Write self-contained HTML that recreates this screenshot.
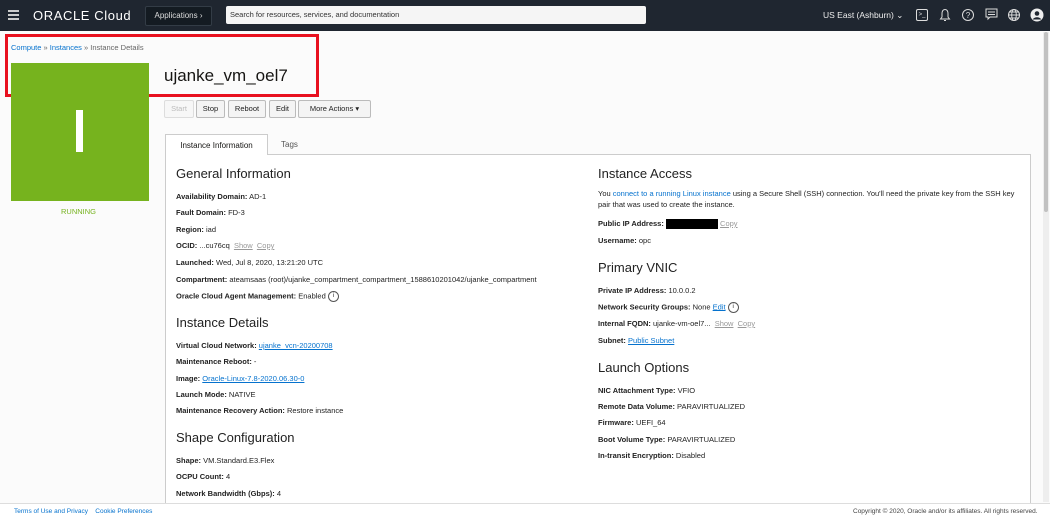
<!DOCTYPE html><html><head><style>
body{margin:0;width:1050px;height:520px;overflow:hidden;background:#fbfbfb;font-family:"Liberation Sans",sans-serif;color:#161513;position:relative}
.nav{position:absolute;left:0;top:0;width:1050px;height:31px;background:#1f2630}
.a{position:absolute;white-space:nowrap}
.row{position:absolute;font-size:7.5px;color:#222}
.row b{font-weight:bold}
h3{position:absolute;margin:0;font-weight:normal;font-size:13px;color:#222;white-space:nowrap}
.btn{position:absolute;top:100px;height:16px;border:1px solid #bbb;background:#f4f4f4;border-radius:2px;font-size:7.5px;line-height:16px;text-align:center;color:#222}
.lk{color:#0572ce}
.gray{color:#999}
.ul{text-decoration:underline;color:#0572ce}
</style></head><body>
<div class="nav">
<div class="a" style="left:8px;top:10px;width:11px;height:1.5px;background:#ccc;box-shadow:0 4px 0 #ccc,0 8px 0 #ccc"></div>
<div class="a" style="left:33px;top:8px;color:#fff;font-size:13px;letter-spacing:0.6px">ORACLE <span>Cloud</span></div>
<div class="a" style="left:145px;top:6px;width:65px;height:18px;background:#141b22;border:1px solid #333c46;border-radius:2px;color:#ddd;font-size:8px;line-height:18px;text-align:center">Applications ›</div>
<div class="a" style="left:226px;top:6px;height:18px;background:#f5f5f5;border-radius:2px;color:#333;font-size:7.5px;line-height:18px;padding-left:4px;box-sizing:border-box;width:420px">Search for resources, services, and documentation</div>
<div class="a" style="left:823px;top:10px;color:#eee;font-size:8.5px">US East (Ashburn) ⌄</div>
<div class="a" style="left:916px;top:9px;width:12px;height:12px;border:1px solid #ddd;border-radius:2px;box-sizing:border-box;color:#ddd;font-size:6px;line-height:10px;text-align:center">&gt;_</div>
<svg class="a" style="left:939px;top:8px" width="12" height="14" viewBox="0 0 12 14"><path d="M6 1.5 C3.5 1.5 3 4 3 6 L3 9 L1.5 11 L10.5 11 L9 9 L9 6 C9 4 8.5 1.5 6 1.5 Z M5 12.5 L7 12.5" fill="none" stroke="#ddd" stroke-width="1"/></svg>
<div class="a" style="left:962px;top:9px;width:12px;height:12px;border:1px solid #ddd;border-radius:50%;box-sizing:border-box;color:#ddd;font-size:8px;line-height:11px;text-align:center">?</div>
<svg class="a" style="left:985px;top:8px" width="13" height="13" viewBox="0 0 13 13"><path d="M1 1 H12 V9 H5 L3 11 V9 H1 Z M3 4 H10 M3 6.5 H10" fill="none" stroke="#ddd" stroke-width="1"/></svg>
<svg class="a" style="left:1007px;top:8px" width="14" height="14" viewBox="0 0 14 14"><g fill="none" stroke="#ddd" stroke-width="1"><circle cx="7" cy="7" r="5.5"/><ellipse cx="7" cy="7" rx="2.3" ry="5.5"/><path d="M1.5 7 H12.5 M2.5 4 H11.5 M2.5 10 H11.5"/></g></svg>
<svg class="a" style="left:1030px;top:8px" width="14" height="14" viewBox="0 0 14 14"><circle cx="7" cy="7" r="6.5" fill="#eee"/><circle cx="7" cy="5.5" r="2.3" fill="#1f2630"/><path d="M2.8 11.5 C4 8.5 10 8.5 11.2 11.5" fill="#1f2630"/></svg>
</div>
<div class="a" style="left:1043px;top:32px;width:6px;height:470px;background:#eee"></div>
<div class="a" style="left:1044px;top:32px;width:4px;height:180px;background:#c1c1c1;border-radius:2px"></div>
<div class="a" style="left:5px;top:34px;width:308px;height:57px;border:3px solid #e8101f"></div>
<div class="a" style="left:11px;top:43px;font-size:7.5px;color:#666"><span class="lk">Compute</span> » <span class="lk">Instances</span> » Instance Details</div>
<div class="a" style="left:11px;top:63px;width:138px;height:138px;background:#76b31e"></div>
<div class="a" style="left:76px;top:110px;width:7px;height:42px;background:#fff"></div>
<div class="a" style="left:61px;top:207px;font-size:7.5px;color:#76b31e">RUNNING</div>
<div class="a" style="left:164px;top:66px;font-size:17px">ujanke_vm_oel7</div>
<div class="btn" style="left:164px;width:28px;color:#bbb;background:#f7f7f7;border-color:#ddd">Start</div>
<div class="btn" style="left:196px;width:27px">Stop</div>
<div class="btn" style="left:228px;width:36px">Reboot</div>
<div class="btn" style="left:269px;width:25px">Edit</div>
<div class="btn" style="left:298px;width:71px">More Actions ▾</div>
<div class="a" style="left:165px;top:134px;width:103px;height:21px;border:1px solid #ccc;border-bottom:none;background:#fff;font-size:8px;line-height:21px;text-align:center;box-sizing:border-box;z-index:2">Instance Information</div>
<div class="a" style="left:281px;top:140px;font-size:8px;color:#555">Tags</div>
<div class="a" style="left:165px;top:154px;width:866px;height:360px;border:1px solid #ccc;background:#fff;box-sizing:border-box"></div>
<h3 style="left:176px;top:166px">General Information</h3>
<div class="row" style="left:176px;top:192px"><b>Availability Domain:</b> AD-1</div>
<div class="row" style="left:176px;top:208px"><b>Fault Domain:</b> FD-3</div>
<div class="row" style="left:176px;top:225px"><b>Region:</b> iad</div>
<div class="row" style="left:176px;top:241px"><b>OCID:</b> ...cu76cq &nbsp;<span class="gray" style="text-decoration:underline">Show</span> &nbsp;<span class="gray" style="text-decoration:underline">Copy</span></div>
<div class="row" style="left:176px;top:258px"><b>Launched:</b> Wed, Jul 8, 2020, 13:21:20 UTC</div>
<div class="row" style="left:176px;top:275px"><b>Compartment:</b> ateamsaas (root)/ujanke_compartment_compartment_1588610201042/ujanke_compartment</div>
<div class="row" style="left:176px;top:291px"><b>Oracle Cloud Agent Management:</b> Enabled <span style="display:inline-block;width:9px;height:9px;border:1px solid #555;border-radius:50%;font-size:6px;text-align:center;line-height:9px;vertical-align:middle">i</span></div>
<h3 style="left:176px;top:315px">Instance Details</h3>
<div class="row" style="left:176px;top:341px"><b>Virtual Cloud Network:</b> <span class="ul">ujanke_vcn-20200708</span></div>
<div class="row" style="left:176px;top:357px"><b>Maintenance Reboot:</b> -</div>
<div class="row" style="left:176px;top:374px"><b>Image:</b> <span class="ul">Oracle-Linux-7.8-2020.06.30-0</span></div>
<div class="row" style="left:176px;top:390px"><b>Launch Mode:</b> NATIVE</div>
<div class="row" style="left:176px;top:406px"><b>Maintenance Recovery Action:</b> Restore instance</div>
<h3 style="left:176px;top:430px">Shape Configuration</h3>
<div class="row" style="left:176px;top:456px"><b>Shape:</b> VM.Standard.E3.Flex</div>
<div class="row" style="left:176px;top:472px"><b>OCPU Count:</b> 4</div>
<div class="row" style="left:176px;top:489px"><b>Network Bandwidth (Gbps):</b> 4</div>
<h3 style="left:598px;top:166px">Instance Access</h3>
<div class="row" style="left:598px;top:188px;width:430px;white-space:normal;line-height:11px">You <span class="lk">connect to a running Linux instance</span> using a Secure Shell (SSH) connection. You'll need the private key from the SSH key pair that was used to create the instance.</div>
<div class="row" style="left:598px;top:219px"><b>Public IP Address:</b> <span style="display:inline-block;width:52px;height:10px;background:#000;vertical-align:middle"></span> <span class="gray" style="text-decoration:underline">Copy</span></div>
<div class="row" style="left:598px;top:236px"><b>Username:</b> opc</div>
<h3 style="left:598px;top:260px">Primary VNIC</h3>
<div class="row" style="left:598px;top:286px"><b>Private IP Address:</b> 10.0.0.2</div>
<div class="row" style="left:598px;top:302px"><b>Network Security Groups:</b> None <span class="ul">Edit</span> <span style="display:inline-block;width:9px;height:9px;border:1px solid #555;border-radius:50%;font-size:6px;text-align:center;line-height:9px;vertical-align:middle">i</span></div>
<div class="row" style="left:598px;top:319px"><b>Internal FQDN:</b> ujanke-vm-oel7... &nbsp;<span class="gray" style="text-decoration:underline">Show</span> &nbsp;<span class="gray" style="text-decoration:underline">Copy</span></div>
<div class="row" style="left:598px;top:336px"><b>Subnet:</b> <span class="ul">Public Subnet</span></div>
<h3 style="left:598px;top:360px">Launch Options</h3>
<div class="row" style="left:598px;top:386px"><b>NIC Attachment Type:</b> VFIO</div>
<div class="row" style="left:598px;top:402px"><b>Remote Data Volume:</b> PARAVIRTUALIZED</div>
<div class="row" style="left:598px;top:418px"><b>Firmware:</b> UEFI_64</div>
<div class="row" style="left:598px;top:435px"><b>Boot Volume Type:</b> PARAVIRTUALIZED</div>
<div class="row" style="left:598px;top:451px"><b>In-transit Encryption:</b> Disabled</div>
<div class="a" style="left:0;top:503px;width:1050px;height:17px;background:#fff;border-top:1px solid #ddd"></div>
<div class="a" style="left:14px;top:508px;font-size:6.5px" ><span class="lk">Terms of Use and Privacy</span> &nbsp;&nbsp; <span class="lk">Cookie Preferences</span></div>
<div class="a" style="left:853px;top:508px;font-size:6.5px;color:#444">Copyright © 2020, Oracle and/or its affiliates. All rights reserved.</div>
</body></html>
